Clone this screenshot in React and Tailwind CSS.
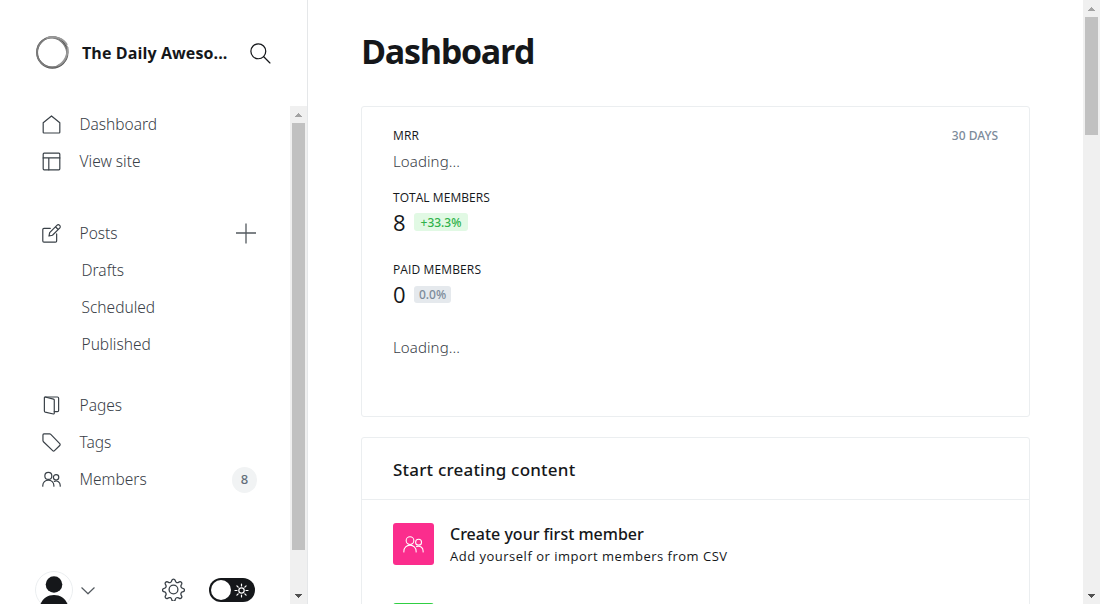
import React from "react";

function Icon({ size = 19, vb = 24, sw = 1.5, className = "", children }) {
  return (
    <svg
      width={size}
      height={size}
      viewBox={`0 0 ${vb} ${vb}`}
      fill="none"
      stroke="currentColor"
      strokeWidth={sw}
      strokeLinecap="round"
      strokeLinejoin="round"
      className={`shrink-0 ${className}`}
    >
      {children}
    </svg>
  );
}

const HomeIcon = () => (
  <Icon>
    <path d="M1.5 9.8v12c0 .5.4.9.9.9h19.2c.5 0 .9-.4.9-.9v-12L12 1.2z" />
  </Icon>
);
const LayoutIcon = () => (
  <Icon>
    <rect x="1.5" y="1.5" width="21" height="21" rx="1.2" />
    <path d="M1.5 7.5h21M8.6 7.5v15" />
  </Icon>
);
const EditIcon = () => (
  <Icon>
    <path d="M18.5 12.5v9c0 .8-.7 1.5-1.5 1.5H2.5C1.700 23 1 22.300 1 21.500V7c0-.8.7-1.500 1.500-1.500h8" />
    <path d="M13.200 14.200l-4.400 1 .9-4.400 9.100-9.100a2.400 2.400 0 013.500 3.500zM17 3.500l3.400 3.400" />
  </Icon>
);
const PagesIcon = () => (
  <Icon>
    <path d="M3 2.200c0-.6.4-1 1-.9l10.500 2.600c.6.200 1 .6 1 1.200v16.700c0 .6-.5 1-1.100.9L4 20.300c-.6-.2-1-.6-1-1.200z" />
    <path d="M4 1.300h15.500c.8 0 1.500.7 1.500 1.500v15.400c0 .8-.7 1.500-1.500 1.500h-4" />
  </Icon>
);
const TagIcon = () => (
  <Icon>
    <path d="M1.200 2.400c0-.7.500-1.200 1.200-1.200h7.300c.5 0 1 .2 1.400.6l11.300 11.700c.7.700.7 1.600 0 2.300l-6.600 6.500c-.7.700-1.600.7-2.300 0L1.800 11c-.4-.4-.6-.9-.6-1.400z" />
  </Icon>
);
const MembersShape = () => (
  <>
    <circle cx="8" cy="7.500" r="4.400" />
    <path d="M1 20.500v-.8c0-3.900 3.100-7 7-7s7 3.100 7 7v.8" />
    <circle cx="17.800" cy="9.300" r="3.400" />
    <path d="M15.500 14.400c4-1.600 7.500 1 7.500 5v1.100" />
  </>
);

function NavItem({ icon, label, children }) {
  return (
    <div className="flex h-[37px] items-center pr-[33px] pl-[42px]">
      {icon}
      {label}
      <div className="ml-auto flex">{children}</div>
    </div>
  );
}

function Triangle({ up = false }) {
  return (
    <div className="flex h-[17px] shrink-0 items-center justify-center">
      <svg width="7" height="4" shapeRendering="crispEdges">
        {up ? (
          <path d="M3 0h1v1h1v1h1v1h1v1H0V3h1V2h1V1h1z" fill="#a3a3a3" />
        ) : (
          <path d="M0 0h7v1H6v1H5v1H4v1H3V3H2V2H1V1H0z" fill="#505050" />
        )}
      </svg>
    </div>
  );
}

function Sidebar() {
  return (
    <aside className="flex h-full w-[308px] shrink-0 flex-col border-r border-[#e5e7e9]">
      <header className="flex h-[106px] shrink-0 items-center pl-[35px]">
        <svg width="35" height="35" viewBox="0 0 35 35" fill="none" className="relative -top-px shrink-0">
          <circle cx="17.300" cy="17.500" r="15.200" stroke="#555" strokeWidth="1.900" />
          <ellipse cx="17.800" cy="17" rx="15.600" ry="14.800" stroke="#888" strokeWidth="1.200" transform="rotate(-35 17.500 17.500)" />
          <ellipse cx="17" cy="18" rx="15.500" ry="14.200" stroke="#777" strokeWidth="1" transform="rotate(40 17.500 17.500)" />
          <path d="M11 3.200C20 0 29 4 32 10M32.500 12c.8 7-2.500 15-9.500 18.500" stroke="#999" strokeWidth="1.800" />
        </svg>
        <div className="ml-3 w-[152px] text-[16px] font-bold tracking-[0.1px] whitespace-nowrap text-[#15171a]">The Daily Aweso...</div>
        <Icon size={21} sw={1.400} className="ml-4 text-[#15171a]">
          <circle cx="9.500" cy="9.500" r="8.500" />
          <path d="M15.700 15.700L22.800 22.800" />
        </Icon>
      </header>

      <div className="flex min-h-0 flex-1">
        <div className="flex min-w-0 flex-1 flex-col text-[15.500px] text-[#394047]">
          <nav className="flex min-h-0 flex-1 flex-col overflow-hidden font-['Noto_Sans',sans-serif] font-light">
            <NavItem icon={<HomeIcon />} label={<span className="ml-[18.500px] pt-px tracking-[0px]">Dashboard</span>} />
            <NavItem icon={<LayoutIcon />} label={<span className="ml-[18.500px] pt-px tracking-[0px]">View site</span>} />
            <div className="h-[35px] shrink-0" />
            <NavItem icon={<EditIcon />} label={<span className="ml-[18.500px] pt-px tracking-[0px]">Posts</span>}>
              <svg width="21" height="21" viewBox="0 0 21 21" stroke="#53595f" strokeWidth="1.300">
                <path d="M10 .5v20M0 10h20" />
              </svg>
            </NavItem>
            <div className="flex h-[37px] items-center pt-px pl-[81.500px] tracking-[0px]">Drafts</div>
            <div className="flex h-[37px] items-center pt-px pl-[81.500px] tracking-[0px]">Scheduled</div>
            <div className="flex h-[37px] items-center pt-px pl-[81.500px] tracking-[0px]">Published</div>
            <div className="h-6 shrink-0" />
            <NavItem icon={<PagesIcon />} label={<span className="ml-[18.500px] pt-px tracking-[0px]">Pages</span>} />
            <NavItem icon={<TagIcon />} label={<span className="ml-[18.500px] pt-px tracking-[0px]">Tags</span>} />
            <NavItem
              icon={<Icon><MembersShape /></Icon>}
              label={<span className="ml-[18.500px] pt-px tracking-[0px]">Members</span>}
            >
              <span className="flex h-[26px] w-[25px] items-center justify-center rounded-full bg-[#f1f3f4] text-[13px] font-medium text-[#626d79]">8</span>
            </NavItem>
          </nav>
          <footer className="flex h-[33px] shrink-0 items-start pl-[35px]">
            <svg width="38" height="33" viewBox="0 0 38 33" fill="none" className="shrink-0">
              <circle cx="19" cy="19" r="18.500" stroke="#ebeef0" />
              <circle cx="19" cy="13.500" r="8.300" fill="#15171a" />
              <path d="M5.500 33C8 27 13 24 19 24s11 3 13.500 9z" fill="#15171a" />
            </svg>
            <svg width="14" height="8" viewBox="0 0 14 8" fill="none" stroke="#53595f" strokeWidth="1.200" strokeLinecap="round" strokeLinejoin="round" className="mt-[16px] ml-2">
              <path d="M.8.800L7 6.800 13.200.800" />
            </svg>
            <Icon size={23} sw={1.350} className="mt-[7px] ml-[66.500px]">
              <circle cx="12" cy="12" r="4.600" />
              <path d="M10.300 2.300c.5-1.600 2.900-1.600 3.400 0l.3 1c.4 1.400 2 2 3.200 1.300l.9-.5c1.500-.8 3.100.9 2.400 2.400l-.5.900c-.7 1.200 0 2.900 1.300 3.300l1 .3c1.600.5 1.600 2.800 0 3.300l-1 .3c-1.400.4-2 2-1.300 3.300l.5.900c.8 1.500-.9 3.100-2.400 2.400l-.9-.5c-1.200-.7-2.900 0-3.200 1.300l-.3 1c-.5 1.600-2.900 1.600-3.400 0l-.3-1c-.4-1.400-2-2-3.200-1.300l-.9.500c-1.500.8-3.100-.9-2.400-2.400l.5-.9c.7-1.200 0-2.900-1.300-3.300l-1-.3c-1.600-.5-1.600-2.800 0-3.300l1-.3c1.400-.4 2-2 1.300-3.300l-.5-.9c-.8-1.500.9-3.100 2.400-2.400l.9.500c1.200.7 2.900 0 3.200-1.300z" />
            </Icon>
            <div className="mt-[7px] ml-[24.500px] flex h-6 w-[46px] shrink-0 items-center justify-between rounded-full bg-[#15171a] pr-[6px] pl-[2px]">
              <div className="size-5 rounded-full bg-white" />
              <svg width="15" height="15" viewBox="0 0 15 15" fill="none" stroke="#fff" strokeWidth="1.200" strokeLinecap="round">
                <circle cx="7.500" cy="7.500" r="2.700" />
                <path d="M7.500 1v2M7.500 12v2M1 7.500h2M12 7.500h2M2.900 2.900l1.300 1.300M10.800 10.800l1.300 1.300M2.900 12.100l1.300-1.300M10.800 4.200l1.300-1.300" />
              </svg>
            </div>
          </footer>
        </div>
        <div className="flex w-[17px] shrink-0 flex-col bg-[#f0f0f0]">
          <Triangle up />
          <div className="mx-[2px] h-[427px] bg-[#c1c1c1]" />
          <div className="flex-1" />
          <Triangle />
        </div>
      </div>
    </aside>
  );
}

function StatsCard() {
  return (
    <section className="flex h-[311px] shrink-0 flex-col rounded-[3px] border border-[#ebeef0] px-[31px] pt-[19px] text-[#15171a]">
      <div className="flex h-5 items-center justify-between text-[12px]">
        <span className="tracking-[0.1px]">MRR</span>
        <span className="font-['Noto_Sans',sans-serif] font-medium tracking-[0px] text-[#7c8b9a]">30 DAYS</span>
      </div>
      <div className="mt-[4px] mb-px h-[22px] font-['Noto_Sans',sans-serif] text-[15px] leading-[22px] font-light tracking-[0.100px] text-[#394047]">Loading...</div>
      <div className="mt-[15px] h-5 text-[12px] leading-5 tracking-[0.050px]">TOTAL MEMBERS</div>
      <div className="-mt-px flex h-[30px] items-center">
        <span className="w-[21px] text-[22px] leading-[30px]">8</span>
        <span className="flex h-[18px] w-[54px] items-center justify-center rounded-[3px] bg-[#e1f9e4] pt-px font-['Noto_Sans',sans-serif] text-[12px] font-medium text-[#30b24a]">+33.3%</span>
      </div>
      <div className="mt-[23px] h-5 text-[12px] leading-5 tracking-[0.120px]">PAID MEMBERS</div>
      <div className="-mt-px flex h-[30px] items-center">
        <span className="w-[21px] text-[22px] leading-[30px]">0</span>
        <span className="mt-px flex h-[17px] w-[37px] items-center justify-center rounded-[3px] bg-[#e5e9ed] pt-px font-['Noto_Sans',sans-serif] text-[12px] font-medium text-[#7c8b9a]">0.0%</span>
      </div>
      <div className="mt-[27px] h-[22px] font-['Noto_Sans',sans-serif] text-[15px] leading-[22px] font-light tracking-[0.100px] text-[#394047]">Loading...</div>
    </section>
  );
}

function StartCard() {
  return (
    <section className="mt-5 shrink-0 rounded-[3px] border border-[#ebeef0] text-[#15171a]">
      <h2 className="flex h-[62px] items-center border-b border-[#ebeef0] pt-[3px] pl-[31px] font-['Noto_Sans',sans-serif] text-[17px] font-medium tracking-[0.2px]">Start creating content</h2>
      <div className="flex flex-col gap-[36px] px-[31px] pt-[23px]">
        <div className="flex gap-4">
          <div className="flex h-[42px] w-[41px] items-center justify-center rounded-[3px] bg-[#fb2d8d] text-white">
            <Icon size={21} sw={1.200}><MembersShape /></Icon>
          </div>
          <div>
            <div className="h-[22px] font-['Noto_Sans',sans-serif] text-[16px] leading-[22px] font-medium">Create your first member</div>
            <div className="h-[22px] text-[13px] leading-[22px] tracking-[0.5px]">Add yourself or import members from CSV</div>
          </div>
        </div>
        <div className="h-[42px] w-[41px] rounded-[3px] bg-[#30cf43]" />
      </div>
    </section>
  );
}

export default function App() {
  return (
    <div className="flex h-[604px] w-[1100px] overflow-hidden bg-white font-['Open_Sans','Noto_Sans',sans-serif]">
      <Sidebar />
      <main className="flex h-full min-w-0 flex-1 flex-col overflow-hidden pr-[53px] pl-[53px]">
        <h1 className="flex h-[106px] shrink-0 items-center pb-[3px] text-[34px] font-bold tracking-[-1.300px] text-[#15171a]">Dashboard</h1>
        <StatsCard />
        <StartCard />
      </main>
      <div className="flex w-[17px] shrink-0 flex-col bg-[#f0f0f0]">
        <Triangle up />
        <div className="mx-[2px] h-[118px] bg-[#c1c1c1]" />
        <div className="flex-1" />
        <Triangle />
      </div>
    </div>
  );
}
